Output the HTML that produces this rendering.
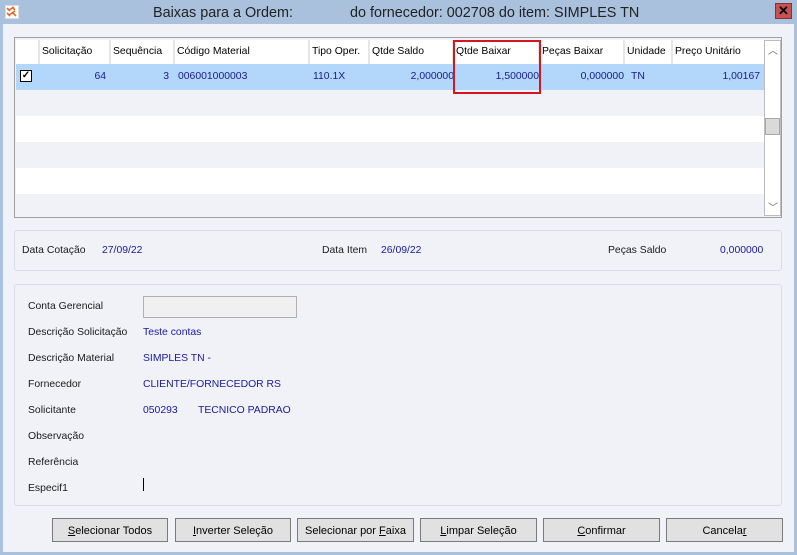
<!DOCTYPE html>
<html><head><meta charset="utf-8"><style>
*{box-sizing:border-box;margin:0;padding:0}
body{width:797px;height:555px;background:#a9c1dc;font-family:"Liberation Sans",sans-serif;font-size:10.4px;color:#000;position:relative;overflow:hidden}
.abs{position:absolute}
.client{left:3px;top:24px;width:791px;height:528px;background:#f0f2f8}
.title{left:0;top:0;width:797px;height:24px;font-size:14.4px;color:#222}
.grid{left:14px;top:37px;width:768px;height:181px;border:1px solid #a0a0a0;background:#f0f2f8}
.hdr{top:2px;height:24px;background:#fff;border-right:2px solid #e6e6e6;padding:6px 0 0 2px;white-space:nowrap;overflow:hidden}
.cell{top:0;height:25px;padding-top:7px;color:#1a1a8a;white-space:nowrap}
.row{left:1px;width:748px;height:26px}
.panel{border:1px solid #d8dde6;border-radius:3px;background:#f0f2f8}
.lbl{color:#1a1a1a}
.val{color:#1a1a9a}
.btn{top:518px;height:24px;border:1px solid #7a7a7a;background:#e1e1e1;text-align:center;padding-top:6px;font-size:11px}
</style></head><body>
<div class="abs title">
 <div class="abs" style="left:5px;top:5px;width:14px;height:14px;background:#fff;border:1px solid #ddd"><svg width="12" height="12" viewBox="0 0 12 12"><path d="M1 2l3 3M6 1l3 3M1 7l3 3M6 6l4 4M3 4l5-3M3 9l6-4" stroke="#e06a2a" stroke-width="1.6"/></svg></div>
 <div class="abs" style="left:153px;top:5px">Baixas para a Ordem:</div>
 <div class="abs" style="left:350px;top:5px">do fornecedor: 002708 do item: SIMPLES TN</div>
 <div class="abs" style="left:775px;top:3px;width:17px;height:16px;background:#c75050;border:1px solid #8a3030;color:#000;font-weight:bold;font-size:13px;text-align:center;line-height:14px">✕</div>
</div>
<div class="abs client"></div>
<div class="abs grid">
 <div class="abs hdr" style="left:1px;width:24px"></div>
 <div class="abs hdr" style="left:25px;width:71px">Solicitação</div>
 <div class="abs hdr" style="left:96px;width:64px">Sequência</div>
 <div class="abs hdr" style="left:160px;width:135px">Código Material</div>
 <div class="abs hdr" style="left:295px;width:60px">Tipo Oper.</div>
 <div class="abs hdr" style="left:355px;width:84px">Qtde Saldo</div>
 <div class="abs hdr" style="left:439px;width:86px">Qtde Baixar</div>
 <div class="abs hdr" style="left:525px;width:85px">Peças Baixar</div>
 <div class="abs hdr" style="left:610px;width:48px">Unidade</div>
 <div class="abs hdr" style="left:658px;width:91px;border-right:none">Preço Unitário</div>
 <div class="abs row" style="top:26px;background:#b3d7fb">
  <div class="abs" style="left:4px;top:6px;width:12px;height:12px;border:1px solid #000;background:#fff;font-size:10px;line-height:10px;text-align:center;font-weight:bold">✓</div>
  <div class="abs cell" style="left:24px;width:66px;text-align:right">64</div>
  <div class="abs cell" style="left:95px;width:58px;text-align:right">3</div>
  <div class="abs cell" style="left:162px">006001000003</div>
  <div class="abs cell" style="left:297px">110.1X</div>
  <div class="abs cell" style="left:354px;width:84px;text-align:right">2,000000</div>
  <div class="abs cell" style="left:440px;width:83px;text-align:right">1,500000</div>
  <div class="abs cell" style="left:525px;width:83px;text-align:right">0,000000</div>
  <div class="abs cell" style="left:615px">TN</div>
  <div class="abs cell" style="left:658px;width:86px;text-align:right">1,00167</div>
 </div>
 <div class="abs row" style="top:52px;background:#f0f2f8"></div>
 <div class="abs row" style="top:78px;background:#fff"></div>
 <div class="abs row" style="top:104px;background:#f0f2f8"></div>
 <div class="abs row" style="top:130px;background:#fff"></div>
 <div class="abs" style="left:749px;top:2px;width:17px;height:176px;background:#fff;border:1px solid #bcbcbc">
  <div class="abs" style="left:3px;top:1px;color:#666;font-size:10px">︿</div>
  <div class="abs" style="left:0;top:77px;width:15px;height:17px;background:#dadada;border:1px solid #a8a8a8"></div>
  <div class="abs" style="left:3px;top:158px;color:#666;font-size:10px">﹀</div>
 </div>
</div>
<div class="abs" style="left:453px;top:40px;width:88px;height:54px;border:2px solid #d6161e"></div>
<div class="abs panel" style="left:14px;top:230px;width:768px;height:41px"></div>
<div class="abs lbl" style="left:22px;top:245px">Data Cotação</div>
<div class="abs val" style="left:102px;top:245px">27/09/22</div>
<div class="abs lbl" style="left:322px;top:245px">Data Item</div>
<div class="abs val" style="left:381px;top:245px">26/09/22</div>
<div class="abs lbl" style="left:608px;top:245px">Peças Saldo</div>
<div class="abs val" style="left:720px;top:245px">0,000000</div>
<div class="abs panel" style="left:14px;top:284px;width:768px;height:222px"></div>
<div class="abs lbl" style="left:28px;top:301px">Conta Gerencial</div>
<div class="abs" style="left:143px;top:296px;width:154px;height:22px;border:1px solid #b0b0b0;background:#f0f0f0"></div>
<div class="abs lbl" style="left:28px;top:327px">Descrição Solicitação</div>
<div class="abs val" style="left:143px;top:327px">Teste contas</div>
<div class="abs lbl" style="left:28px;top:353px">Descrição Material</div>
<div class="abs val" style="left:143px;top:353px">SIMPLES TN -</div>
<div class="abs lbl" style="left:28px;top:379px">Fornecedor</div>
<div class="abs val" style="left:143px;top:379px">CLIENTE/FORNECEDOR RS</div>
<div class="abs lbl" style="left:28px;top:405px">Solicitante</div>
<div class="abs val" style="left:143px;top:405px">050293</div>
<div class="abs val" style="left:198px;top:405px">TECNICO PADRAO</div>
<div class="abs lbl" style="left:28px;top:431px">Observação</div>
<div class="abs lbl" style="left:28px;top:457px">Referência</div>
<div class="abs lbl" style="left:28px;top:483px">Especif1</div>
<div class="abs" style="left:143px;top:478px;width:1px;height:13px;background:#000"></div>
<div class="abs btn" style="left:52px;width:116px"><u>S</u>elecionar Todos</div>
<div class="abs btn" style="left:175px;width:116px"><u>I</u>nverter Seleção</div>
<div class="abs btn" style="left:297px;width:117px">Selecionar por <u>F</u>aixa</div>
<div class="abs btn" style="left:420px;width:117px"><u>L</u>impar Seleção</div>
<div class="abs btn" style="left:543px;width:117px"><u>C</u>onfirmar</div>
<div class="abs btn" style="left:666px;width:117px">Cancela<u>r</u></div>
</body></html>
